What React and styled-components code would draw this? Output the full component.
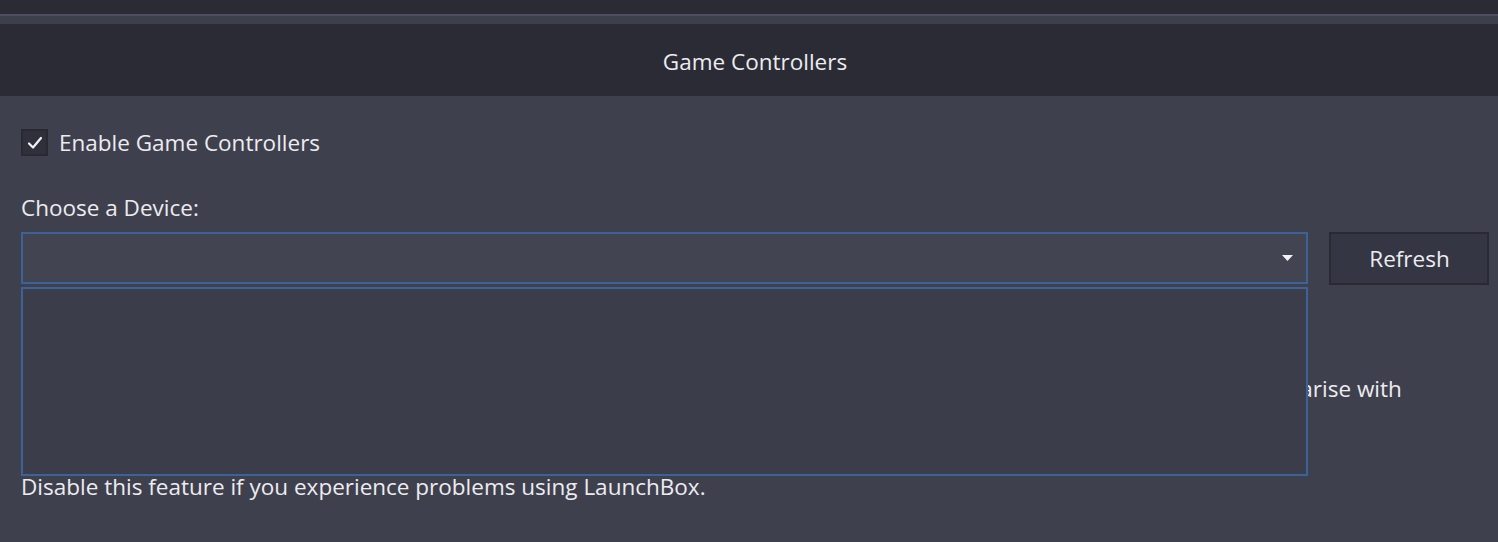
import React from "react";
import styled, { createGlobalStyle } from "styled-components";

const Global = createGlobalStyle`
  html, body { margin: 0; padding: 0; background: #3f404d; }
  body { font-family: "Open Sans", "Noto Sans", sans-serif; color: #ececf0; overflow: hidden; }
`;

const Page = styled.div`
  width: 1498px;
  height: 542px;
  background: #3f404d;
  display: flex;
  flex-direction: column;
`;

const TopStrip = styled.div`
  height: 14px;
  background: #2b2b35;
`;

const StripLine = styled.div`
  height: 2px;
  background: #4e4e60;
`;

const StripBand = styled.div`
  height: 8px;
  background: #3e3f4c;
`;

const Header = styled.div`
  height: 72px;
  box-sizing: border-box;
  background: #2b2b35;
  display: flex;
  align-items: center;
  justify-content: center;
  padding: 3px 0 0 12px;
  font-size: 22.5px;
  color: #ececf0;
`;

const Content = styled.div`
  padding: 33px 10px 0 21px;
  display: flex;
  flex-direction: column;
`;

const CheckRow = styled.label`
  display: flex;
  align-items: center;
  gap: 11px;
  height: 27px;
  font-size: 22.5px;
`;

const Box = styled.span`
  width: 27px;
  height: 27px;
  box-sizing: border-box;
  background: #2f303b;
  border: 2px solid #292932;
  display: flex;
  align-items: center;
  justify-content: center;
  flex-shrink: 0;
`;

const Label = styled.div`
  margin-top: 38px;
  font-size: 22.5px;
  line-height: 28px;
`;

const DeviceRow = styled.div`
  margin-top: 10px;
  display: flex;
  gap: 21px;
  align-items: flex-start;
  position: relative;
  z-index: 2;
`;

const ComboWrap = styled.div`
  position: relative;
  width: 1287px;
  flex-shrink: 0;
`;

const Combo = styled.div`
  height: 52px;
  box-sizing: border-box;
  border: 2px solid #3c6399;
  background: #434452;
  display: flex;
  align-items: center;
  justify-content: flex-end;
  padding-right: 13px;
`;

const Popup = styled.div`
  position: absolute;
  left: 0;
  right: 0;
  top: 55px;
  height: 189px;
  box-sizing: border-box;
  border: 2px solid #3c6399;
  background: #3c3d4a;
`;

const Button = styled.button`
  width: 160px;
  height: 53px;
  box-sizing: border-box;
  background: #353643;
  border: 2px solid #2a2a33;
  color: #ececf0;
  font-family: inherit;
  font-size: 22.5px;
  padding: 0 0 0 1px;
  flex-shrink: 0;
`;

const Paragraph = styled.p`
  margin: 0;
  font-size: 22.5px;
  line-height: 32.5px;
  white-space: nowrap;
`;

const Info = styled.div`
  margin-top: 88px;
  display: flex;
  flex-direction: column;
`;

export default function App() {
  return (
    <>
      <Global />
      <Page>
        <TopStrip />
        <StripLine />
        <StripBand />
        <Header>Game Controllers</Header>
        <Content>
          <CheckRow>
            <Box>
              <svg width="16" height="14" viewBox="0 0 16 14">
                <path d="M2 7.5 L6 11.5 L14 2" fill="none" stroke="#f2f2f5" strokeWidth="2.2" strokeLinecap="round" strokeLinejoin="round" />
              </svg>
            </Box>
            Enable Game Controllers
          </CheckRow>
          <Label>Choose a Device:</Label>
          <DeviceRow>
            <ComboWrap>
              <Combo>
                <svg width="11" height="6" viewBox="0 0 11 6">
                  <path d="M0 0 L11 0 L5.5 6 Z" fill="#f2f2f5" />
                </svg>
              </Combo>
              <Popup />
            </ComboWrap>
            <Button>Refresh</Button>
          </DeviceRow>
          <Info>
            <Paragraph>When enabled, LaunchBox will listen for inputs from the selected controllers so you can browse games. Take time to familiarise with</Paragraph>
            <Paragraph>the controller settings before using them.</Paragraph>
            <Paragraph>&nbsp;</Paragraph>
            <Paragraph>Disable this feature if you experience problems using LaunchBox.</Paragraph>
          </Info>
        </Content>
      </Page>
    </>
  );
}
